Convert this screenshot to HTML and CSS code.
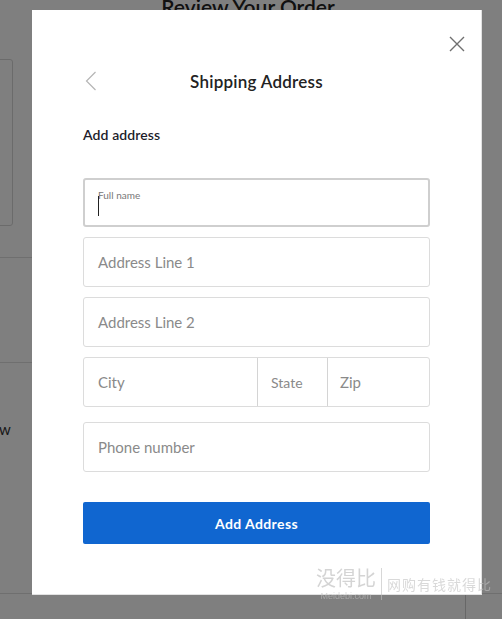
FILE: index.html
```html
<!DOCTYPE html>
<html lang="en">
<head>
<meta charset="utf-8">
<title>Shipping Address</title>
<link rel="stylesheet" href="styles.css">
</head>
<body>
  <div class="page">
    <h1 class="page-title">Review Your Order</h1>
    <div class="page-card"></div>
    <div class="page-rule rule-a"></div>
    <div class="page-rule rule-b"></div>
    <div class="page-link">w</div>
    <div class="page-rule rule-c"></div>
    <div class="page-divider"></div>
  </div>

  <div class="overlay"></div>

  <div class="modal">
    <button class="close" aria-label="Close">
      <svg width="16" height="16" viewBox="0 0 16 16"><path d="M1 1 L15 15 M15 1 L1 15" stroke="#6f6f6f" stroke-width="1.4" fill="none"/></svg>
    </button>
    <div class="modal-head">
      <button class="back" aria-label="Back">
        <svg width="12" height="20" viewBox="0 0 12 20"><path d="M10.5 1 L1.5 10 L10.5 19" stroke="#b5b5b5" stroke-width="1.2" fill="none"/></svg>
      </button>
      <h2 class="modal-title">Shipping Address</h2>
    </div>

    <h3 class="section-title">Add address</h3>

    <form class="form">
      <div class="field focused">
        <span class="float-label">Full name</span>
        <span class="caret"></span>
      </div>
      <div class="field"><span class="ph">Address Line 1</span></div>
      <div class="field"><span class="ph">Address Line 2</span></div>
      <div class="field-row">
        <div class="cell city"><span class="ph">City</span></div>
        <div class="cell state"><span class="ph">State</span></div>
        <div class="cell zip"><span class="ph">Zip</span></div>
      </div>
      <div class="field phone"><span class="ph">Phone number</span></div>
      <button type="button" class="submit">Add Address</button>
    </form>
  </div>

  <div class="stamp">
    <div class="stamp-brand">
      <span class="stamp-cn">没得比</span>
      <span class="stamp-url">Meidebi.com</span>
    </div>
    <span class="stamp-bar"></span>
    <span class="stamp-slogan">网购有钱就得比</span>
  </div>
</body>
</html>
```

FILE: styles.css
```css
* { box-sizing: border-box; }

html, body {
  margin: 0;
  padding: 0;
  width: 502px;
  height: 619px;
  overflow: hidden;
  background: #fff;
  font-family: "Lato", "Open Sans", sans-serif;
}

/* page beneath the dialog */
.page {
  position: relative;
  width: 502px;
  height: 619px;
}

.page-title {
  margin: 0;
  position: absolute;
  top: -6px;
  left: 0;
  width: 496px;
  text-align: center;
  font-size: 21px;
  line-height: 26px;
  font-weight: 600;
  color: #222;
}

.page-card {
  position: absolute;
  left: -10px;
  top: 59px;
  width: 23px;
  height: 167px;
  border: 1px solid #d6d6d6;
  border-radius: 3px;
}

.page-rule {
  position: absolute;
  left: 0;
  height: 1px;
  background: #dedede;
}
.rule-a { top: 257px; width: 40px; }
.rule-b { top: 362px; width: 40px; }
.rule-c { top: 593px; width: 502px; }

.page-link {
  position: absolute;
  left: -1px;
  top: 420px;
  font-size: 15px;
  color: #333;
}

.page-divider {
  position: absolute;
  left: 465px;
  top: 594px;
  width: 1px;
  height: 30px;
  background: #cfcfcf;
}

.overlay {
  position: fixed;
  inset: 0;
  background: rgba(0, 0, 0, 0.5);
}

/* dialog */
.modal {
  position: absolute;
  left: 32px;
  top: 10px;
  width: 450px;
  height: 585px;
  background: #fff;
  border-right: 1px solid #e2e2e2;
  border-bottom: 1px solid #e2e2e2;
  padding: 56px 51px 0 51px;
}

.close {
  position: absolute;
  right: 16px;
  top: 26px;
  padding: 0;
  border: 0;
  background: none;
  line-height: 0;
}

.modal-head {
  position: relative;
  display: flex;
  justify-content: center;
  align-items: center;
  height: 30px;
}

.back {
  position: absolute;
  left: 2px;
  top: 5px;
  padding: 0;
  border: 0;
  background: none;
  line-height: 0;
}

.modal-title {
  margin: 0;
  font-size: 17px;
  font-weight: 600;
  color: #222;
  letter-spacing: 0.25px;
}

.section-title {
  margin: 29px 0 0;
  font-size: 14px;
  font-weight: 600;
  color: #1d1d2b;
  line-height: 20px;
  letter-spacing: 0.1px;
}

.form {
  margin-top: 33px;
  display: flex;
  flex-direction: column;
  gap: 10px;
}

.field {
  position: relative;
  height: 50px;
  border: 1px solid #dcdcdc;
  border-radius: 3px;
  display: flex;
  align-items: center;
  padding: 0 14px;
}

.field.focused {
  border: 2px solid #cfcfcf;
  height: 49px;
  padding: 0 13px;
}

.float-label {
  position: absolute;
  left: 13px;
  top: 9px;
  font-size: 10px;
  color: #777;
}

.caret {
  position: absolute;
  left: 13px;
  top: 16px;
  width: 1px;
  height: 20px;
  background: #222;
}

.ph {
  font-size: 15px;
  color: #8a8a8a;
}

.field-row {
  display: flex;
  height: 50px;
  border: 1px solid #dcdcdc;
  border-radius: 3px;
}

.cell {
  display: flex;
  align-items: center;
  padding: 0 14px;
}
.city { width: 173px; }
.state { width: 70px; border-left: 1px solid #d4d4d4; padding: 0 13px; }
.state .ph { font-size: 14px; }
.zip { flex: 1; border-left: 1px solid #d4d4d4; padding: 0 12px; }

.phone { margin-top: 5px; }

.submit {
  margin-top: 20px;
  height: 42px;
  border: 0;
  border-radius: 2px;
  background: #1066d0;
  color: #fff;
  font-family: inherit;
  font-size: 14px;
  font-weight: 700;
  letter-spacing: 0.4px;
}

/* watermark */
.stamp {
  position: absolute;
  left: 316px;
  top: 565px;
  display: flex;
  align-items: flex-start;
  gap: 5px;
  opacity: 0.6;
}

.stamp-brand {
  display: flex;
  flex-direction: column;
  align-items: center;
}

.stamp-cn {
  font-family: "Noto Sans CJK SC", sans-serif;
  font-size: 20px;
  line-height: 26px;
  color: #b8b8b8;
}

.stamp-url {
  font-family: "Liberation Sans", sans-serif;
  font-size: 9px;
  line-height: 10px;
  color: #c4c4c4;
}

.stamp-bar {
  width: 1px;
  height: 32px;
  background: #bdbdbd;
  margin-top: 3px;
}

.stamp-slogan {
  margin-top: 11px;
  font-family: "Noto Sans CJK SC", sans-serif;
  font-size: 14px;
  line-height: 16px;
  letter-spacing: 1px;
  color: #c0c0c0;
}
```
